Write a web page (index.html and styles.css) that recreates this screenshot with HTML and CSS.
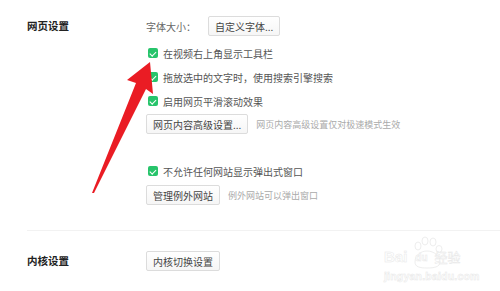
FILE: index.html
```html
<!DOCTYPE html>
<html lang="zh-CN">
<head>
    <meta charset="UTF-8">
    <link rel="stylesheet" href="styles.css">
</head>
<body>
    <div class="page">
        <div class="section">
            <div class="section-title">网页设置</div>
            <div class="section-body">
                <div class="row font-row">
                    <span class="label">字体大小：</span>
                    <button class="btn">自定义字体...</button>
                </div>
                <div class="row check-row"><span class="check"></span>在视频右上角显示工具栏</div>
                <div class="row check-row"><span class="check"></span>拖放选中的文字时，使用搜索引擎搜索</div>
                <div class="row check-row"><span class="check"></span>启用网页平滑滚动效果</div>
                <div class="row btn-row">
                    <button class="btn">网页内容高级设置...</button>
                    <span class="hint">网页内容高级设置仅对极速模式生效</span>
                </div>
                <div class="row check-row popup-row"><span class="check"></span>不允许任何网站显示弹出式窗口</div>
                <div class="row btn-row">
                    <button class="btn">管理例外网站</button>
                    <span class="hint">例外网站可以弹出窗口</span>
                </div>
            </div>
        </div>
        <div class="divider"></div>
        <div class="section core">
            <div class="section-title">内核设置</div>
            <div class="section-body">
                <button class="btn">内核切换设置</button>
            </div>
        </div>
    </div>

    <svg class="arrow" width="500" height="291" viewBox="0 0 500 291">
        <polygon points="150,62 127,80 136,83 92,193 94,193 146,89 153,94" fill="#ea1c24"/>
    </svg>

    <div class="watermark">
        <svg class="paw" width="40" height="34" viewBox="0 0 40 34">
            <g fill="none" stroke="#eeeeee" stroke-width="1">
                <ellipse cx="11" cy="10" rx="3" ry="4"/>
                <ellipse cx="18" cy="5" rx="3" ry="4"/>
                <ellipse cx="26" cy="6" rx="3" ry="4"/>
                <ellipse cx="32" cy="13" rx="3" ry="3.5"/>
                <path d="M8 26 C8 19 14 15 20 15 C27 15 33 20 33 26 C33 31 27 32 20 32 C13 32 8 31 8 26 Z"/>
            </g>
        </svg>
        <div class="wm-line"><span class="wm-bai">Bai</span><span class="wm-du">du</span><span class="wm-jy">经验</span></div>
        <div class="wm-url">jingyan.baidu.com</div>
    </div>
</body>
</html>
```

FILE: styles.css
```css
* {
    margin: 0;
    padding: 0;
    box-sizing: border-box;
}

body {
    width: 500px;
    height: 291px;
    background: #fff;
    font-family: "Noto Sans CJK SC", "Noto Sans", sans-serif;
    font-size: 10px;
    color: #555;
    overflow: hidden;
    position: relative;
}

.page {
    padding: 16px 0 0 27px;
}

.section {
    display: flex;
}

.section-title {
    width: 119px;
    font-size: 10.5px;
    font-weight: bold;
    color: #222;
    line-height: 20px;
}

.section-body {
    display: flex;
    flex-direction: column;
}

.row {
    display: flex;
    align-items: center;
}

.font-row {
    height: 20px;
    margin-bottom: 5px;
}

.label {
    width: 62px;
    color: #666;
}

.check-row {
    height: 24px;
    padding-left: 2px;
}

.check {
    width: 10px;
    height: 10px;
    border-radius: 2px;
    background: #27c46b;
    margin-right: 5px;
    position: relative;
}

.check::after {
    content: "";
    position: absolute;
    left: 3px;
    top: 1.5px;
    width: 2.5px;
    height: 5px;
    border: solid #fff;
    border-width: 0 1.2px 1.2px 0;
    transform: rotate(45deg);
}

.btn-row {
    margin-top: 1px;
}

.btn {
    height: 20px;
    padding: 0 6px;
    border: 1px solid #dcdcdc;
    border-radius: 2px;
    background: linear-gradient(#fff, #f6f6f6);
    font-family: inherit;
    font-size: 10px;
    color: #444;
}

.hint {
    margin-left: 8px;
    font-size: 9px;
    color: #aaa;
}

.popup-row {
    margin-top: 25px;
}

.popup-row + .btn-row {
    margin-top: 2px;
}

.divider {
    height: 1px;
    background: #f2f2f2;
    margin: 25px 0 20px 0;
}

.arrow {
    position: absolute;
    left: 0;
    top: 0;
    pointer-events: none;
}

.watermark {
    position: absolute;
    left: 384px;
    top: 236px;
    width: 92px;
    font-family: "Liberation Sans", sans-serif;
    color: #fff;
    -webkit-text-stroke: 0.5px #e8e8e8;
}

.paw {
    position: absolute;
    left: 23px;
    top: 0;
}

.wm-line {
    position: relative;
    display: flex;
    align-items: flex-end;
    margin-top: 14px;
    height: 14px;
}

.wm-bai {
    font-size: 15px;
    font-weight: bold;
    line-height: 14px;
}

.wm-du {
    font-size: 10px;
    font-weight: bold;
    margin: 0 7px 0 8px;
    line-height: 12px;
}

.wm-jy {
    font-family: "Noto Sans CJK SC", sans-serif;
    font-size: 13px;
    line-height: 14px;
}

.wm-url {
    margin-top: 6px;
    font-size: 10.5px;
    font-weight: bold;
    letter-spacing: 0.2px;
}
```
